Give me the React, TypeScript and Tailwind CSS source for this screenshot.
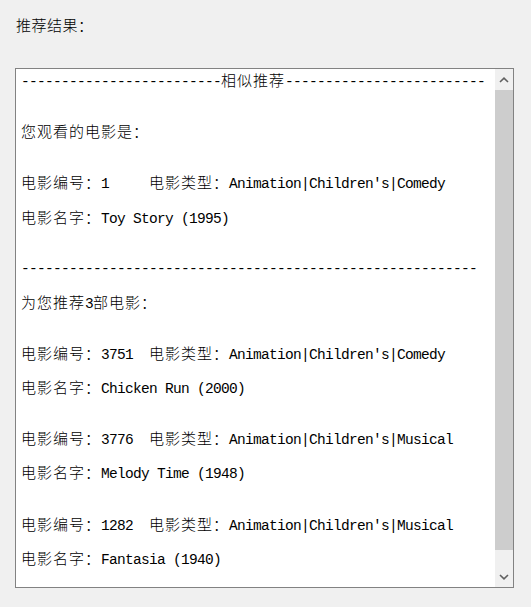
import React from "react";

const dashes = (n: number) => "-".repeat(n);

const lines: string[] = [
  dashes(25) + "相似推荐" + dashes(25),
  "",
  "",
  "您观看的电影是：",
  "",
  "",
  "电影编号：1     电影类型：Animation|Children's|Comedy",
  "",
  "电影名字：Toy Story (1995)",
  "",
  "",
  dashes(57),
  "",
  "为您推荐3部电影：",
  "",
  "",
  "电影编号：3751  电影类型：Animation|Children's|Comedy",
  "",
  "电影名字：Chicken Run (2000)",
  "",
  "",
  "电影编号：3776  电影类型：Animation|Children's|Musical",
  "",
  "电影名字：Melody Time (1948)",
  "",
  "",
  "电影编号：1282  电影类型：Animation|Children's|Musical",
  "",
  "电影名字：Fantasia (1940)",
];

// split a line into CJK runs (full width, 16px) and latin runs (half width, 8px)
const splitRuns = (text: string) => {
  const runs: { cjk: boolean; text: string }[] = [];
  const re = /[\u3000-\u9fff\uff00-\uffef]+/g;
  let last = 0;
  let m: RegExpExecArray | null;
  while ((m = re.exec(text)) !== null) {
    if (m.index > last) runs.push({ cjk: false, text: text.slice(last, m.index) });
    runs.push({ cjk: true, text: m[0] });
    last = m.index + m[0].length;
  }
  if (last < text.length) runs.push({ cjk: false, text: text.slice(last) });
  return runs;
};

const Line = ({ text }: { text: string }) => (
  <div className="h-[17.07px] whitespace-pre leading-[17.07px] text-black">
    {splitRuns(text).map((run, i) =>
      run.cjk ? (
        <span
          key={i}
          className="font-['Noto_Sans_CJK_SC',sans-serif] text-[15px] font-light tracking-[1px]"
        >
          {run.text}
        </span>
      ) : (
        <span
          key={i}
          className="font-['Liberation_Mono','Noto_Sans_CJK_SC',monospace] text-[14.5px] tracking-[-0.7px]"
        >
          {run.text}
        </span>
      )
    )}
  </div>
);

const Chevron = ({ up }: { up?: boolean }) => (
  <svg width="10" height="6" viewBox="0 0 10 6" fill="none">
    <path
      d={up ? "M1 5L5 1.2L9 5" : "M1 1L5 4.8L9 1"}
      stroke="#606060"
      strokeWidth="1.6"
    />
  </svg>
);

const App = () => {
  return (
    <div className="min-h-[607px] w-[531px] bg-[#f0f0f0]">
      <div className="h-[68px] pl-[16px] pt-[16px] font-['Noto_Sans_CJK_SC',sans-serif] text-[15px] font-light leading-[18px] tracking-[0.5px] text-black">
        推荐结果：
      </div>
      <div className="ml-[15px] flex h-[520px] w-[499px] border border-[#828282] bg-white">
        <div className="flex-1 overflow-hidden pl-[5px] pt-[2px]">
          {lines.map((line, i) => (
            <Line key={i} text={line} />
          ))}
        </div>
        <div className="flex w-[18px] flex-col bg-[#f0f0f0]">
          <div className="flex h-[21px] items-center justify-center">
            <Chevron up />
          </div>
          <div className="h-[460px] bg-[#cdcdcd]" />
          <div className="flex-1" />
          <div className="flex h-[21px] items-center justify-center">
            <Chevron />
          </div>
        </div>
      </div>
    </div>
  );
};

export default App;
